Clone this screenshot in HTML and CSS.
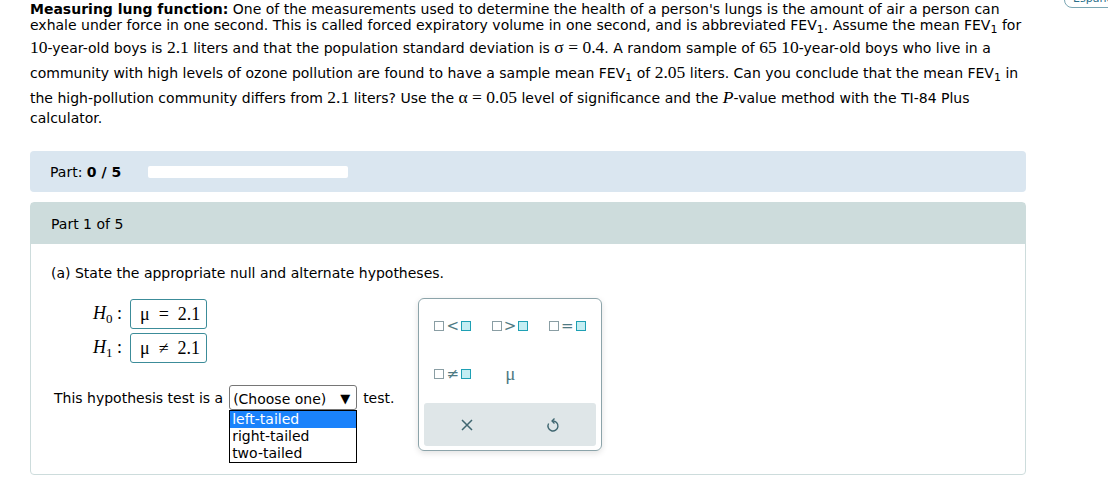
FILE: index.html
```html
<!DOCTYPE html>
<html>
<head>
<meta charset="utf-8">
<link rel="stylesheet" href="styles.css">
</head>
<body>
<div class="lang">Español</div>
<div class="page">
  <p class="question"><b>Measuring lung function:</b> One of the measurements used to determine the health of a person's lungs is the amount of air a person can<br>exhale under force in one second. This is called forced expiratory volume in one second, and is abbreviated FEV<sub>1</sub>. Assume the mean FEV<sub>1</sub> for<br><span class="m">10</span>-year-old boys is <span class="m">2.1</span> liters and that the population standard deviation is <span class="m">σ = 0.4</span>. A random sample of <span class="m">65</span> <span class="m">10</span>-year-old boys who live in a<br>community with high levels of ozone pollution are found to have a sample mean FEV<sub>1</sub> of <span class="m">2.05</span> liters. Can you conclude that the mean FEV<sub>1</sub> in<br>the high-pollution community differs from <span class="m">2.1</span> liters? Use the <span class="m">α = 0.05</span> level of significance and the <span class="m"><i>P</i></span>-value method with the TI-84 Plus<br>calculator.</p>

  <div class="partbar">
    <span>Part: <b>0 / 5</b></span>
    <div class="progress"></div>
  </div>

  <div class="card">
    <div class="card-head">Part 1 of 5</div>
    <div class="card-body">
      <div class="prompt">(a) State the appropriate null and alternate hypotheses.</div>
      <div class="work">
        <div class="answers">
          <div class="hrow">
            <span class="hlabel"><i>H</i><sub>0</sub> :</span>
            <span class="hbox">μ&nbsp; = &nbsp;2.1</span>
          </div>
          <div class="hrow">
            <span class="hlabel"><i>H</i><sub>1</sub> :</span>
            <span class="hbox">μ&nbsp; ≠ &nbsp;2.1</span>
          </div>
          <div class="testrow">
            <span>This hypothesis test is a</span>
            <div class="select">
              <span>(Choose one)</span><span class="arrow">▼</span>
              <div class="options">
                <div class="opt sel">left-tailed</div>
                <div class="opt">right-tailed</div>
                <div class="opt">two-tailed</div>
              </div>
            </div>
            <span>test.</span>
          </div>
        </div>
        <div class="palette">
          <div class="symbols">
            <div class="sym"><i class="sq"></i><span class="op">&lt;</span><i class="sq t"></i></div>
            <div class="sym"><i class="sq"></i><span class="op">&gt;</span><i class="sq t"></i></div>
            <div class="sym"><i class="sq"></i><span class="op">=</span><i class="sq t"></i></div>
            <div class="sym"><i class="sq"></i><span class="op">≠</span><i class="sq t"></i></div>
            <div class="sym mu">μ</div>
          </div>
          <div class="actions">
            <svg width="14" height="14" viewBox="0 0 14 14"><path d="M2 2 L12 12 M12 2 L2 12" stroke="#3f6670" stroke-width="1.5" fill="none"/></svg>
            <svg width="16" height="16" viewBox="0 0 16 16"><path d="M9.5 1.5 L7 4 L9.5 6.5" stroke="#3f6670" stroke-width="1.4" fill="none" stroke-linejoin="round"/><path d="M7.5 4 A5 5 0 1 1 3.6 6.5" stroke="#3f6670" stroke-width="1.4" fill="none"/></svg>
          </div>
        </div>
      </div>
    </div>
  </div>
</div>
</body>
</html>
```
FILE: styles.css
```css
body {
  margin: 0;
  font-family: "DejaVu Sans", Verdana, sans-serif;
  font-size: 14px;
  color: #000;
  position: relative;
}
.lang {
  position: absolute;
  left: 1064px;
  top: -10px;
  width: 70px;
  height: 16px;
  border: 1px solid #7aa6b3;
  border-radius: 8px;
  font-size: 11px;
  color: #2a6f8a;
  padding-left: 8px;
  line-height: 16px;
  overflow: hidden;
}
.page {
  width: 996px;
  margin-left: 30px;
  padding-top: 1px;
}
.question {
  margin: 0;
  line-height: 16px;
}
.m {
  font-family: "Liberation Serif", serif;
  font-size: 17.5px;
  display: inline-block;
  line-height: 25px;
}
sub {
  font-size: 11px;
  vertical-align: -3px;
  line-height: 1;
}
.partbar {
  margin-top: 25px;
  height: 41px;
  background: #dae6f0;
  border-radius: 4px;
  display: flex;
  align-items: center;
  padding-left: 20px;
  gap: 27px;
}
.progress {
  width: 200px;
  height: 12px;
  background: #fff;
  border-radius: 2px;
}
.card {
  margin-top: 10px;
  border: 1px solid #cddcdc;
  border-radius: 4px;
}
.card-head {
  background: #cddcdc;
  height: 41px;
  display: flex;
  align-items: center;
  padding-left: 20px;
}
.card-body {
  padding: 21px 20px 0;
  height: 209px;
}
.prompt {
  line-height: 16px;
}
.work {
  margin-top: 17px;
  display: flex;
}
.answers {
  width: 367px;
  padding-top: 1px;
}
.hrow {
  display: flex;
  align-items: center;
  margin-bottom: 4px;
}
.hlabel {
  font-family: "Liberation Serif", serif;
  font-size: 18px;
  width: 37px;
  margin-left: 42px;
}
.hlabel sub {
  font-size: 13px;
  font-family: "Liberation Serif", serif;
  vertical-align: -4px;
}
.hbox {
  font-family: "Liberation Serif", serif;
  font-size: 18px;
  border: 1px solid #3c8c99;
  border-radius: 3px;
  line-height: 28px;
  padding-left: 9px;
  box-sizing: border-box;
  width: 77px;
  height: 30px;
}
.testrow {
  margin-top: 22px;
  display: flex;
  align-items: center;
  padding-left: 3px;
  gap: 6px;
}
.select {
  position: relative;
  width: 128px;
  height: 25px;
  box-sizing: border-box;
  border: 1px solid #767676;
  border-radius: 3px;
  display: flex;
  align-items: center;
  justify-content: space-between;
  padding: 2px 6px 0 3px;
}
.arrow {
  font-size: 13px;
}
.options {
  position: absolute;
  left: -1px;
  top: 24px;
  width: 128px;
  box-sizing: border-box;
  border: 1px solid #000;
  background: #fff;
}
.opt {
  height: 17px;
  line-height: 17px;
  padding-left: 2px;
}
.opt.sel {
  background: #1a82fb;
  color: #fff;
}
.palette {
  width: 184px;
  height: 153px;
  box-sizing: border-box;
  border: 1px solid #8ca4aa;
  border-radius: 6px;
  box-shadow: 0 2px 6px rgba(0, 0, 0, 0.12);
  padding: 3px 5px 4px;
  display: flex;
  flex-direction: column;
}
.symbols {
  display: grid;
  grid-template-columns: repeat(3, 1fr);
  grid-auto-rows: 48px;
}
.sym {
  display: flex;
  align-items: center;
  justify-content: center;
  gap: 1px;
  color: #4f7a83;
}
.sq {
  display: inline-block;
  width: 10px;
  height: 10px;
  box-sizing: border-box;
  border: 1.5px solid #8a9ea4;
  background: #fff;
}
.sq.t {
  border-color: #1ea0b4;
  background: #c4eef3;
}
.op {
  font-size: 15px;
  line-height: 1;
  padding: 0 1px;
}
.mu {
  font-family: "Liberation Serif", serif;
  font-size: 19px;
  justify-content: flex-start;
  padding-left: 24px;
}
.actions {
  margin-top: 5px;
  height: 44px;
  background: #dfe6e8;
  border-radius: 3px;
  display: flex;
  align-items: center;
  justify-content: space-around;
}
```
